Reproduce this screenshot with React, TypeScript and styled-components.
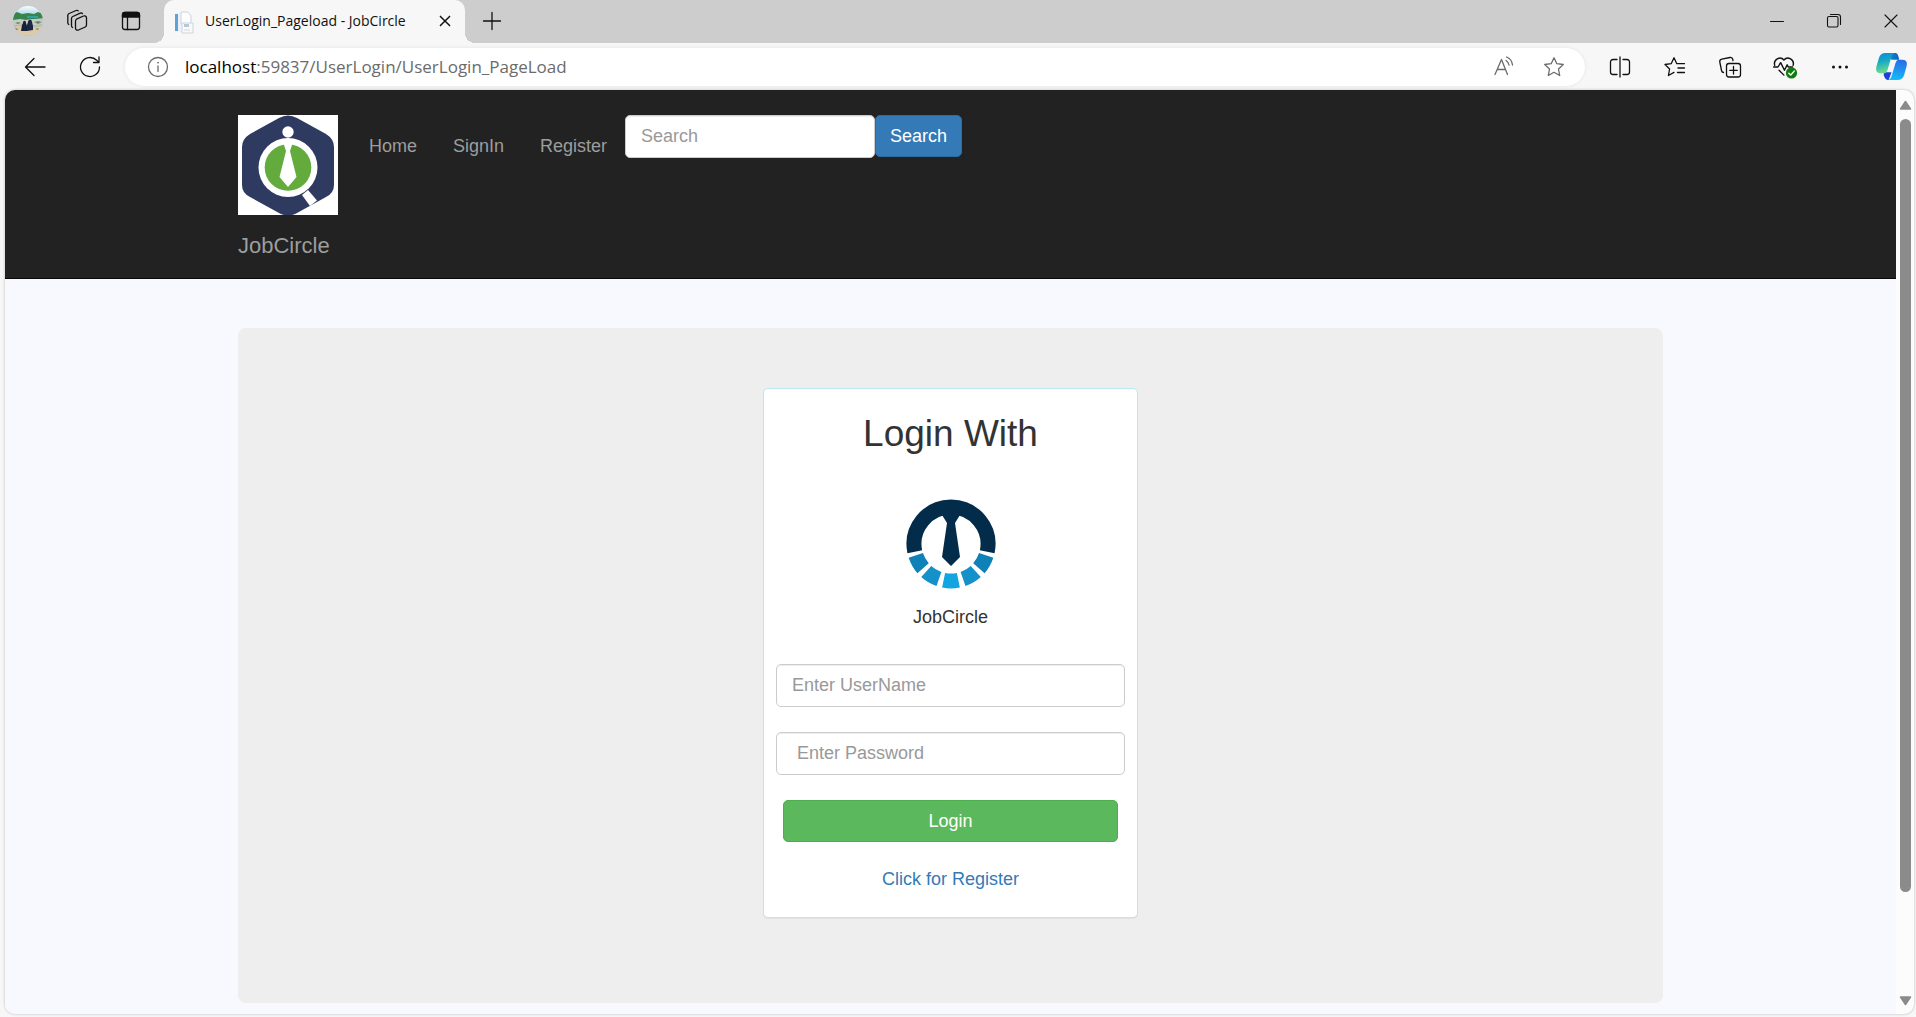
import React from "react";
import styled, { createGlobalStyle } from "styled-components";

const GlobalStyle = createGlobalStyle`
  *, *::before, *::after { box-sizing: border-box; }
  body { margin: 0; background: #f7f7f7; }
  button, input { font: inherit; }
`;

const uiFont = `"Segoe UI", "Open Sans", "Noto Sans", sans-serif`;
const pageFont = `"Helvetica Neue", Helvetica, Arial, "Liberation Sans", sans-serif`;

/* ---------- browser window ---------- */

const Window = styled.div`
  display: flex;
  flex-direction: column;
  height: 100vh;
  background: #f7f7f7;
  font-family: ${uiFont};
  color: #111;
`;

const IconButton = styled.button<{ $width?: number }>`
  display: flex;
  flex: none;
  align-items: center;
  justify-content: center;
  width: ${(p) => p.$width ?? 55}px;
  height: 100%;
  padding: 0;
  border: 0;
  background: transparent;
  color: inherit;
`;

const TabStrip = styled.div`
  display: flex;
  flex: none;
  height: 43px;
  padding-left: 2px;
  background: #cdcdcd;

  ${IconButton} {
    padding-bottom: 2px;
  }
`;

const Tab = styled.div`
  position: relative;
  display: flex;
  align-items: center;
  width: 301px;
  margin-left: 6px;
  padding: 0 8px 0 10px;
  border-radius: 10px 10px 0 0;
  background: #f7f7f7;

  &::before,
  &::after {
    content: "";
    position: absolute;
    bottom: 0;
    width: 10px;
    height: 10px;
  }
  &::before {
    left: -10px;
    background: radial-gradient(circle at 0 0, #cdcdcd 10px, #f7f7f7 10px);
  }
  &::after {
    right: -10px;
    background: radial-gradient(circle at 100% 0, #cdcdcd 10px, #f7f7f7 10px);
  }
`;

const TabTitle = styled.span`
  flex: 1;
  margin-left: 11px;
  padding-bottom: 2px;
  overflow: hidden;
  font-size: 14px;
  line-height: 20px;
  white-space: nowrap;
`;

const WindowControls = styled.div`
  display: flex;
  gap: 7px;
  margin-left: auto;
`;

const Toolbar = styled.div`
  display: flex;
  flex: none;
  align-items: center;
  height: 47px;
  padding-left: 7px;
`;

const AddressBar = styled.div`
  display: flex;
  flex: 1;
  align-items: center;
  min-width: 0;
  height: 38px;
  margin: 0 7px 0 8px;
  padding: 0 6px 0 5px;
  border-radius: 19px;
  background: #fff;
  box-shadow: 0 0 4px rgba(0, 0, 0, 0.08);
  color: #6b6b6b;
`;

const Address = styled.span`
  flex: 1;
  overflow: hidden;
  font-size: 17px;
  line-height: 24px;
  white-space: nowrap;

  b {
    font-weight: 400;
    color: #000;
  }
`;

const Viewport = styled.div`
  display: flex;
  flex: 1;
  min-height: 0;
  margin: 0 2px 3px 5px;
  overflow: hidden;
  border-radius: 10px;
  background: #fcfcfc;
  box-shadow: 0 0 3px rgba(0, 0, 0, 0.25);
`;

const ScrollBar = styled.div`
  display: flex;
  flex: none;
  flex-direction: column;
  align-items: center;
  width: 18px;
  padding: 10px 0 8px;
`;

const ScrollTrack = styled.div`
  flex: 1;
  width: 11px;
  margin: 9px 0;
`;

const ScrollThumb = styled.div`
  height: 89%;
  border-radius: 6px;
  background: #8b8b8b;
`;

/* ---------- web page ---------- */

const Page = styled.div`
  flex: 1;
  min-width: 0;
  overflow: hidden;
  background: #f8f9ff;
  font-family: ${pageFont};
  font-size: 18px;
  line-height: 25px;
  color: #333;
`;

const NavBar = styled.header`
  padding: 25px 19px 19px;
  border-bottom: 1px solid #080808;
  background: #222;
`;

const NavInner = styled.div`
  display: flex;
  align-items: flex-start;
  max-width: 1425px;
  margin: 0 auto;
`;

const Brand = styled.a`
  display: flex;
  flex-direction: column;
  gap: 18px;
  width: 100px;
  font-size: 22px;
  line-height: 26px;
  color: #9d9d9d;
  text-decoration: none;

  svg {
    display: block;
  }
`;

const NavLinks = styled.nav`
  display: flex;
  margin-left: 13px;
  padding-top: 19px;
`;

const NavLink = styled.a`
  padding: 0 18px;
  color: #9d9d9d;
  text-decoration: none;
`;

const SearchForm = styled.form`
  display: flex;
  align-items: flex-start;
`;

const Field = styled.input`
  width: 100%;
  height: 43px;
  padding: 0 15px;
  border: 1px solid #ccc;
  border-radius: 5px;
  outline: 0;
  background: #fff;
  box-shadow: inset 0 1px 1px rgba(0, 0, 0, 0.075);
  color: #555;

  &::placeholder {
    color: #999;
    opacity: 1;
  }
`;

const SearchField = styled(Field)`
  width: 250px;
`;

const Button = styled.button<{ $tone: "primary" | "success" }>`
  height: 42px;
  padding: 0 14px;
  border: 1px solid ${(p) => (p.$tone === "primary" ? "#2e6da4" : "#4cae4c")};
  border-radius: 5px;
  background: ${(p) => (p.$tone === "primary" ? "#337ab7" : "#5cb85c")};
  color: #fff;
`;

const Content = styled.main`
  padding: 49px 19px 11px;
`;

const Jumbotron = styled.section`
  max-width: 1425px;
  margin: 0 auto;
  padding: 60px 20px 85px;
  border-radius: 8px;
  background: #eee;
`;

const LoginCard = styled.form`
  display: flex;
  flex-direction: column;
  gap: 25px;
  max-width: 375px;
  margin: 0 auto;
  padding: 24px 12px 25px;
  border: 1px solid #bce8f1;
  border-radius: 5px;
  background: #fff;
  box-shadow: 0 1px 1px rgba(0, 0, 0, 0.05);
`;

const CardHead = styled.div`
  display: flex;
  flex-direction: column;
  align-items: center;
  padding-bottom: 9px;

  svg {
    display: block;
    margin: 44px 0 16px;
  }
`;

const Heading = styled.h2`
  margin: 0;
  font-size: 37px;
  font-weight: 500;
  line-height: 42px;
`;

const LoginButton = styled(Button)`
  margin: 0 7px;
`;

const RegisterLink = styled.a`
  align-self: center;
  color: #337ab7;
  text-decoration: none;
`;

/* ---------- drawings ---------- */

const Icon = ({ size = 24, children }: { size?: number; children: React.ReactNode }) => (
  <svg
    width={size}
    height={size}
    viewBox="0 0 24 24"
    fill="none"
    stroke="currentColor"
    strokeWidth="1.3"
    strokeLinecap="round"
    strokeLinejoin="round"
    aria-hidden="true"
  >
    {children}
  </svg>
);

const Avatar = () => (
  <svg width="30" height="30" viewBox="0 0 30 30" aria-hidden="true">
    <defs>
      <clipPath id="avatar">
        <circle cx="15" cy="15" r="15" />
      </clipPath>
      <linearGradient id="sky" x1="0" y1="0" x2="0" y2="1">
        <stop offset="0" stopColor="#fbfdfd" />
        <stop offset="1" stopColor="#a7d8ea" />
      </linearGradient>
    </defs>
    <g clipPath="url(#avatar)">
      <rect width="30" height="30" fill="#b4bfb2" />
      <rect width="30" height="9" fill="url(#sky)" />
      <path d="M0 8l4-2 5 2 6-1 6 1 4-2 5 2v4l-8 1-10 1-12 1z" fill="#39834d" />
      <path d="M14 10h11v2H14z" fill="#2aa2a6" />
      <path d="M0 14l7-1 6 1 9-1 8 1v4l-8 1-9-1-13 1z" fill="#c3cfc4" />
      <path d="M0 21l9-1 10 2 11-2v11H0z" fill="#dccba9" />
      <path d="M2 17l3-1 3 1-3 1zM21 16l4-1 4 1-4 2zM2 22l4 1-3 1zM22 23l4-1-1 2z" fill="#7b8270" />
      <path d="M8 25l1-6 1-2c0-3 3-3 3 0l1 3v5z" fill="#182138" />
      <path d="M14 25v-6l1-3c0-3 4-3 4 0l1 4v4z" fill="#1c2748" />
    </g>
  </svg>
);

const Favicon = () => (
  <svg width="20" height="24" viewBox="0 0 20 24" aria-hidden="true">
    <path d="M1 3h14l3 4v15H1z" fill="#eef2f6" />
    <path d="M1 4h3v17H1z" fill="#5fa3d6" />
    <path d="M7 2h7l3 4v8H7z" fill="#fdfdfe" stroke="#cdd5dd" />
    <path d="M8 13h11v10H8z" fill="#f8f9fa" stroke="#cdd5dd" />
    <path d="M10 14h5v3h-5z" fill="#b8c7d6" />
    <path d="M10 20h6" stroke="#d2d8df" />
  </svg>
);

const Copilot = () => (
  <svg width="31" height="27" viewBox="0 0 32 28" aria-hidden="true">
    <defs>
      <linearGradient id="cpA" x1="0" y1="0" x2="0.2" y2="1">
        <stop offset="0" stopColor="#0f86dd" />
        <stop offset="0.45" stopColor="#16a9c4" />
        <stop offset="1" stopColor="#6bdc8c" />
      </linearGradient>
      <linearGradient id="cpB" x1="0.6" y1="0" x2="0.4" y2="1">
        <stop offset="0" stopColor="#2a6be6" />
        <stop offset="1" stopColor="#12bdfb" />
      </linearGradient>
      <linearGradient id="cpC" x1="0" y1="0" x2="1" y2="0">
        <stop offset="0" stopColor="#0c9bd8" />
        <stop offset="1" stopColor="#0b62b8" />
      </linearGradient>
    </defs>
    <path d="M8 20h8l-3 8c-3 0-4-2-5-5z" fill="#1a44d8" />
    <path d="M10 0h10c2 0 3 2 4 7h-8z" fill="url(#cpC)" />
    <path d="M10 0h9c-2 1-3 3-4 7l-3 10c-1 3-2 4-4 4H5c-5 0-6-3-4-9l2-7c1-3 3-5 7-5z" fill="url(#cpA)" />
    <path d="M22 28h-9c2-1 3-3 4-7l3-10c1-3 2-4 4-4h3c5 0 6 3 4 9l-2 7c-1 3-3 5-7 5z" fill="url(#cpB)" />
  </svg>
);

const HexLogo = () => (
  <svg width="100" height="100" viewBox="0 0 100 100" role="img" aria-label="JobCircle logo">
    <rect width="100" height="100" fill="#fff" />
    <path
      d="M41 3Q50-2 59 3L88 19Q96 24 96 32V70Q96 78 88 82L59 98Q50 103 41 98L12 82Q4 78 4 70V32Q4 24 12 19Z"
      fill="#2e3a5f"
    />
    <circle cx="50" cy="17" r="5.7" fill="#fff" />
    <circle cx="50" cy="52.5" r="29.5" fill="#fff" />
    <circle cx="50" cy="52.5" r="23.3" fill="#62ab3c" />
    <path d="M45 27h10l-3 9 6.500 26L50 72l-8.500-10L48 36z" fill="#fff" />
    <path d="M64 80l6-5 9 10.500-7 5.500z" fill="#fff" />
  </svg>
);

const point = (angle: number, radius: number) => {
  const a = (angle * Math.PI) / 180;
  return `${(45 + radius * Math.cos(a)).toFixed(2)} ${(45 + radius * Math.sin(a)).toFixed(2)}`;
};

const segments = [
  { from: 18, to: 41, color: "#0d81b8" },
  { from: 48, to: 71, color: "#1391c8" },
  { from: 78.5, to: 101.5, color: "#12a5df" },
  { from: 109, to: 132, color: "#1391c8" },
  { from: 139, to: 162, color: "#0d81b8" },
];

const DialLogo = () => (
  <svg width="90" height="90" viewBox="0 0 90 90" fill="none" role="img" aria-label="JobCircle">
    <path d={`M${point(168, 37)}A37 37 0 1 1 ${point(12, 37)}`} stroke="#032c4b" strokeWidth="15" />
    {segments.map((s) => (
      <path
        key={s.from}
        d={`M${point(s.from, 37)}A37 37 0 0 1 ${point(s.to, 37)}`}
        stroke={s.color}
        strokeWidth="15"
      />
    ))}
    <path d="M36 13h18v3l-5 8 5 34-9 9-9-9 5-34-5-8z" fill="#032c4b" />
  </svg>
);

const Arrow = ({ down = false }: { down?: boolean }) => (
  <svg width="13" height="10" viewBox="0 0 13 10" aria-hidden="true">
    <path
      d={down ? "M1.500 1h10L6.500 8.500z" : "M1.500 9h10L6.500 1.500z"}
      fill="#8b8b8b"
      stroke="#8b8b8b"
      strokeWidth="1.500"
      strokeLinejoin="round"
    />
  </svg>
);

/* ---------- assembly ---------- */

const BrowserChrome = () => (
  <>
    <TabStrip>
      <IconButton $width={51} aria-label="Profile">
        <Avatar />
      </IconButton>
      <IconButton $width={50} aria-label="Workspaces">
        <Icon>
          <path d="M10.500 10.200l7-3.200c1.500-.6 3 .2 3 1.700v7.300c0 .9-.5 1.600-1.300 2l-6.700 3c-1.500.6-3-.2-3-1.700v-7.100c0-.9.300-1.600 1-2z" />
          <path d="M6.500 18.500c-.6-.4-1-1-1-1.800V9.500c0-.9.500-1.600 1.300-2l7.500-3.300c.8-.3 1.700-.1 2.200.4" />
          <path d="M2.800 15.500c-.6-.4-1-1-1-1.800V6.500c0-.9.500-1.600 1.300-2l7-3c.8-.3 1.700-.1 2.200.4" />
        </Icon>
      </IconButton>
      <IconButton $width={55} aria-label="Tab actions">
        <Icon>
          <rect x="3.500" y="3.500" width="17" height="17" rx="2.500" />
          <path d="M3.500 8V6A2.500 2.500 0 0 1 6 3.500h12A2.500 2.500 0 0 1 20.500 6v2z" fill="currentColor" />
          <path d="M8.500 8v12.500" />
        </Icon>
      </IconButton>
      <Tab>
        <Favicon />
        <TabTitle>UserLogin_Pageload - JobCircle</TabTitle>
        <IconButton $width={24} aria-label="Close tab">
          <Icon size={20}>
            <path d="M6.500 6.500l11 11M17.500 6.500l-11 11" strokeWidth="1.800" />
          </Icon>
        </IconButton>
      </Tab>
      <IconButton $width={53} aria-label="New tab">
        <Icon>
          <path d="M12 3.500v17M3.500 12h17" />
        </Icon>
      </IconButton>
      <WindowControls>
        <IconButton $width={50} aria-label="Minimize">
          <Icon>
            <path d="M5.500 12.500h13" strokeWidth="1" />
          </Icon>
        </IconButton>
        <IconButton $width={50} aria-label="Restore">
          <Icon>
            <rect x="5.500" y="7.500" width="10.500" height="10.500" rx="1.500" strokeWidth="1.100" />
            <path d="M8.500 5.500h7.500a2.500 2.500 0 0 1 2.500 2.500v7.500" strokeWidth="1.100" />
          </Icon>
        </IconButton>
        <IconButton $width={50} aria-label="Close">
          <Icon>
            <path d="M6 6l12 12M18 6L6 18" strokeWidth="1.100" />
          </Icon>
        </IconButton>
      </WindowControls>
    </TabStrip>
    <Toolbar>
      <IconButton aria-label="Back">
        <Icon>
          <path d="M22 12H2.500M11 3.500L2.500 12l8.500 8.500" />
        </Icon>
      </IconButton>
      <IconButton aria-label="Refresh">
        <Icon>
          <path d="M21.500 12a9.500 9.500 0 1 1-2.800-6.700l1.800 1.800M21 2v5.500h-5.500" />
        </Icon>
      </IconButton>
      <AddressBar>
        <IconButton aria-label="Site information">
          <Icon>
            <circle cx="12" cy="12" r="9.500" />
            <path d="M12 11v5.500" />
            <circle cx="12" cy="7.700" r=".5" fill="currentColor" strokeWidth=".8" />
          </Icon>
        </IconButton>
        <Address>
          <b>localhost</b>:59837/UserLogin/UserLogin_PageLoad
        </Address>
        <IconButton $width={50} aria-label="Read aloud">
          <Icon>
            <path d="M3 19.500L9.500 4.500 15.500 19.500M5.500 14.500h8" />
            <path d="M14 5.500c1.700 1 2.700 2.500 3 4.500M14.500 2c3.400 1.300 5.600 4.200 6 8" />
          </Icon>
        </IconButton>
        <IconButton $width={50} aria-label="Add to favorites">
          <Icon>
            <path d="M12 2.800l2.800 5.900 6.500.8-4.800 4.500 1.200 6.500-5.700-3.200-5.700 3.200 1.200-6.500-4.800-4.500 6.500-.8z" />
          </Icon>
        </IconButton>
      </AddressBar>
      <IconButton aria-label="Split screen">
        <Icon>
          <path d="M12 2v20M9 4.500H5A2.500 2.500 0 0 0 2.500 7v10A2.500 2.500 0 0 0 5 19.500h4M15 4.500h4A2.500 2.500 0 0 1 21.500 7v10a2.500 2.500 0 0 1-2.500 2.500h-4" />
        </Icon>
      </IconButton>
      <IconButton aria-label="Favorites">
        <Icon>
          <path d="M21.500 8.700h-7.700L11 2.800 8.200 8.700l-6.200.8 4.600 4.500-1.200 6.500 5.600-3.100" />
          <path d="M15 13h6.500M14.500 17.500h7" />
        </Icon>
      </IconButton>
      <IconButton aria-label="Collections">
        <Icon>
          <rect x="8.500" y="8.500" width="14" height="13.500" rx="2.500" />
          <path d="M15.500 11.500v7.500M11.700 15.300h7.600" />
          <path d="M5.500 17.500c-1.200-.2-1.800-1-2-2L1.800 7c-.3-1.500.5-2.500 2-2.800L12 2.500c1.500-.3 2.500.5 2.800 2l.2 1" />
        </Icon>
      </IconButton>
      <IconButton aria-label="Browser essentials">
        <Icon size={26}>
          <path d="M11 19.500l-4.500-4.500M2.500 10.500c-1.500-5.500 5-9 8.500-5 3.500-4 10-.5 8.500 5" />
          <path d="M1.500 12h4l2.500-4 3.500 7 2.500-5 1 2h4" />
          <circle cx="18" cy="17.500" r="5.200" fill="#107c10" stroke="none" />
          <path d="M15.500 17.700l1.800 1.600 3.200-3.500" stroke="#fff" />
        </Icon>
      </IconButton>
      <IconButton aria-label="Settings and more">
        <Icon>
          <g fill="currentColor" stroke="none">
            <circle cx="5.500" cy="12" r="1.500" />
            <circle cx="12" cy="12" r="1.500" />
            <circle cx="18.500" cy="12" r="1.500" />
          </g>
        </Icon>
      </IconButton>
      <IconButton $width={49} aria-label="Copilot">
        <Copilot />
      </IconButton>
    </Toolbar>
  </>
);

const stop = (e: React.FormEvent) => e.preventDefault();

const LoginPage = () => (
  <Page>
    <NavBar>
      <NavInner>
        <Brand href="#home">
          <HexLogo />
          JobCircle
        </Brand>
        <NavLinks>
          <NavLink href="#home">Home</NavLink>
          <NavLink href="#signin">SignIn</NavLink>
          <NavLink href="#register">Register</NavLink>
        </NavLinks>
        <SearchForm onSubmit={stop}>
          <SearchField type="text" placeholder="Search" aria-label="Search" />
          <Button $tone="primary" type="submit">
            Search
          </Button>
        </SearchForm>
      </NavInner>
    </NavBar>
    <Content>
      <Jumbotron>
        <LoginCard onSubmit={stop}>
          <CardHead>
            <Heading>Login With</Heading>
            <DialLogo />
            <span>JobCircle</span>
          </CardHead>
          <Field type="text" placeholder="Enter UserName" aria-label="Enter UserName" />
          <Field type="password" placeholder=" Enter Password" aria-label="Enter Password" />
          <LoginButton $tone="success" type="submit">
            Login
          </LoginButton>
          <RegisterLink href="#register">Click for Register</RegisterLink>
        </LoginCard>
      </Jumbotron>
    </Content>
  </Page>
);

export default function App() {
  return (
    <>
      <GlobalStyle />
      <Window>
        <BrowserChrome />
        <Viewport>
          <LoginPage />
          <ScrollBar>
            <Arrow />
            <ScrollTrack>
              <ScrollThumb />
            </ScrollTrack>
            <Arrow down />
          </ScrollBar>
        </Viewport>
      </Window>
    </>
  );
}
